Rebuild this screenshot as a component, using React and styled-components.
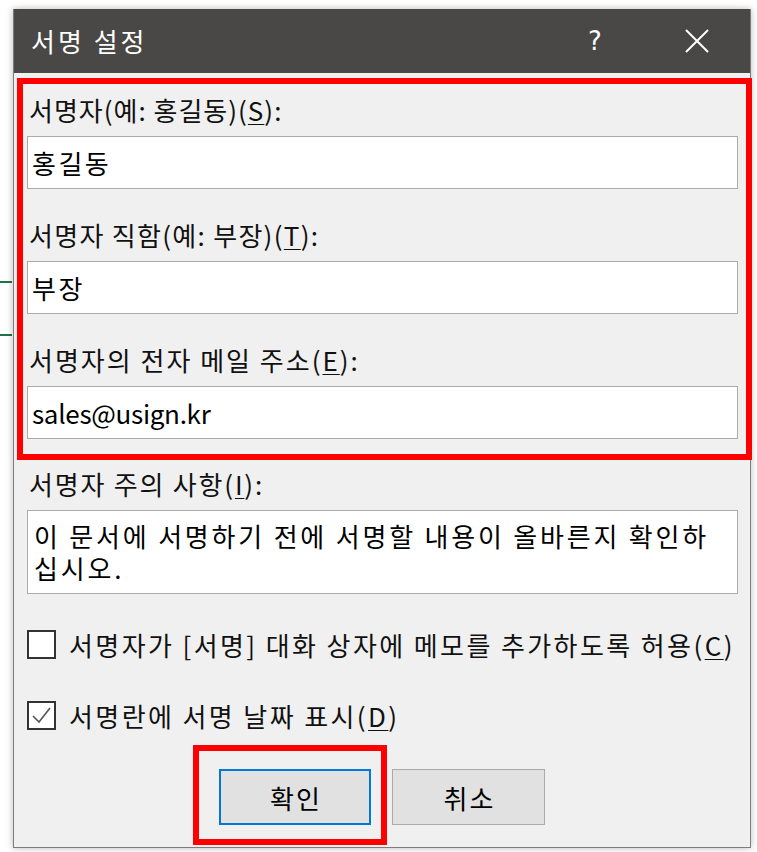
// Signature setup dialog (서명 설정) with red annotation frames

import React from 'react';
import styled, { createGlobalStyle } from 'styled-components';

const colors = {
  titleBar: '#4a4846',
  dialogBg: '#f0f0f0',
  border: '#7d7d7d',
  field: '#ababab',
  text: '#111',
  red: '#ff0000',
  focus: '#0078d7',
  button: '#e1e1e1',
  sheetLine: '#217346',
};

// --- Page: white sheet with two stray grid lines peeking at the left ---
const GlobalStyle = createGlobalStyle`
  html, body { margin: 0; padding: 0; }
  body {
    width: 757px;
    height: 852px;
    overflow: hidden;
    background-color: #fff;
    background-image: linear-gradient(${colors.sheetLine}, ${colors.sheetLine}),
      linear-gradient(${colors.sheetLine}, ${colors.sheetLine});
    background-repeat: no-repeat;
    background-size: 12px 2px, 12px 2px;
    background-position: 0 281px, 0 334px;
    font-family: "Noto Sans CJK KR", "Noto Sans", sans-serif;
  }
`;

const Dialog = styled.div`
  box-sizing: border-box;
  margin: 9px 0 0 13px;
  width: 738px;
  height: 839px;
  border: 1px solid ${colors.border};
  border-top: none;
  background: ${colors.dialogBg};
  box-shadow: 0 0 7px rgba(0, 0, 0, 0.28);
  display: flex;
  flex-direction: column;
`;

// --- Title bar ---
const TitleBar = styled.div`
  height: 64px;
  background: ${colors.titleBar};
  display: flex;
  align-items: center;
  padding-left: 17px;
  color: #fff;
`;
const Title = styled.div`
  font-size: 26px;
  letter-spacing: 3px;
  line-height: 1;
  flex: 1;
`;
const TitleButton = styled.div`
  width: ${({ $w }) => $w}px;
  height: 64px;
  display: flex;
  align-items: center;
  justify-content: center;
  font-family: "DejaVu Sans", sans-serif;
  font-size: 26px;
  color: #fff;
`;

// --- Content ---
const Content = styled.div`
  display: flex;
  flex-direction: column;
  padding: 0 12px 0 13px;
`;

// red annotation frame around the three signer fields
const FieldGroup = styled.div`
  margin: 5px -14px 0 -10px;
  border: 6px solid ${colors.red};
  padding: 6px 8px 15px 4px;
  display: flex;
  flex-direction: column;
  gap: 26px;
`;

const Field = styled.div`
  display: flex;
  flex-direction: column;
  margin-top: ${({ $mt }) => $mt || 0}px;
`;

const Label = styled.label`
  font-size: 26px;
  letter-spacing: ${({ $ls }) => $ls}px;
  line-height: 40px;
  height: 40px;
  margin: 0 0 6px 2px;
  color: ${colors.text};
  white-space: nowrap;
`;

const Key = styled.u`
  text-underline-offset: 3px;
  text-decoration-thickness: 1px;
`;

const TextInput = styled.input`
  box-sizing: border-box;
  height: 53px;
  width: 100%;
  margin: 0;
  border: 1px solid ${colors.field};
  background: #fff;
  padding: 0 4px;
  font-family: inherit;
  font-size: 26px;
  letter-spacing: ${({ $ls }) => $ls}px;
  color: #000;
  outline: none;
`;

const TextArea = styled.textarea`
  box-sizing: border-box;
  height: 84px;
  width: 100%;
  margin: 0;
  border: 1px solid ${colors.field};
  background: #fff;
  padding: 9px 6px 0 6px;
  font-family: inherit;
  font-size: 26px;
  letter-spacing: 2.8px;
  line-height: 32px;
  color: #000;
  resize: none;
  overflow: hidden;
  outline: none;
`;

// --- Checkbox rows ---
const CheckRow = styled.label`
  display: flex;
  align-items: center;
  gap: 13px;
  height: 40px;
  margin-top: ${({ $mt }) => $mt}px;
  font-size: 26px;
  letter-spacing: 2.4px;
  color: ${colors.text};
  white-space: nowrap;
`;
const Box = styled.span`
  box-sizing: border-box;
  width: 29px;
  height: 29px;
  border: 2px solid #333;
  background: #fff;
  display: flex;
  align-items: center;
  justify-content: center;
  flex: none;
`;

// --- Buttons ---
const ButtonRow = styled.div`
  display: flex;
  align-items: flex-start;
  margin-top: 10px;
  padding-left: 179px;
`;
// red annotation frame around the OK button
const Highlight = styled.div`
  border: 6px solid ${colors.red};
  padding: 18px 10px 14px 20px;
`;
const Button = styled.button`
  box-sizing: border-box;
  width: ${({ $w }) => $w}px;
  height: 56px;
  margin: ${({ $mt }) => $mt || 0}px 0 0 ${({ $ml }) => $ml || 0}px;
  background: ${colors.button};
  border: ${({ $primary }) => ($primary ? `2px solid ${colors.focus}` : `1px solid ${colors.field}`)};
  font-family: inherit;
  font-size: 26px;
  letter-spacing: 2px;
  color: #000;
  padding: 0 0 0 2px;
`;

const CheckMark = () => (
  <svg width="23" height="20" viewBox="0 0 23 20">
    <path d="M3 11 L9 17 L20 3" fill="none" stroke="#555" strokeWidth="1.6" />
  </svg>
);

const CloseIcon = () => (
  <svg width="24" height="24" viewBox="0 0 24 24">
    <path d="M1 1 L23 23 M23 1 L1 23" stroke="#fff" strokeWidth="2" />
  </svg>
);

export default function App() {
  return (
    <>
      <GlobalStyle />
      <Dialog>
        <TitleBar>
          <Title>서명 설정</Title>
          <TitleButton $w={98}>?</TitleButton>
          <TitleButton $w={106}><CloseIcon /></TitleButton>
        </TitleBar>
        <Content>
          <FieldGroup>
            <Field>
              <Label $ls={1}>서명자(예: 홍길동)(<Key>S</Key>):</Label>
              <TextInput $ls={2.5} readOnly defaultValue="홍길동" />
            </Field>
            <Field>
              <Label $ls={1.3}>서명자 직함(예: 부장)(<Key>T</Key>):</Label>
              <TextInput $ls={2.5} readOnly defaultValue="부장" />
            </Field>
            <Field>
              <Label $ls={2}>서명자의 전자 메일 주소(<Key>E</Key>):</Label>
              <TextInput $ls={-0.3} readOnly defaultValue="sales@usign.kr" />
            </Field>
          </FieldGroup>
          <Field $mt={4}>
            <Label $ls={1.8}>서명자 주의 사항(<Key>I</Key>):</Label>
            <TextArea readOnly defaultValue="이 문서에 서명하기 전에 서명할 내용이 올바른지 확인하십시오." />
          </Field>
          <CheckRow $mt={30}>
            <Box />
            <span>서명자가 [서명] 대화 상자에 메모를 추가하도록 허용(<Key>C</Key>)</span>
          </CheckRow>
          <CheckRow $mt={31}>
            <Box><CheckMark /></Box>
            <span>서명란에 서명 날짜 표시(<Key>D</Key>)</span>
          </CheckRow>
        </Content>
        <ButtonRow>
          <Highlight>
            <Button $w={152} $primary>확인</Button>
          </Highlight>
          <Button $w={153} $mt={24} $ml={5}>취소</Button>
        </ButtonRow>
      </Dialog>
    </>
  );
}
